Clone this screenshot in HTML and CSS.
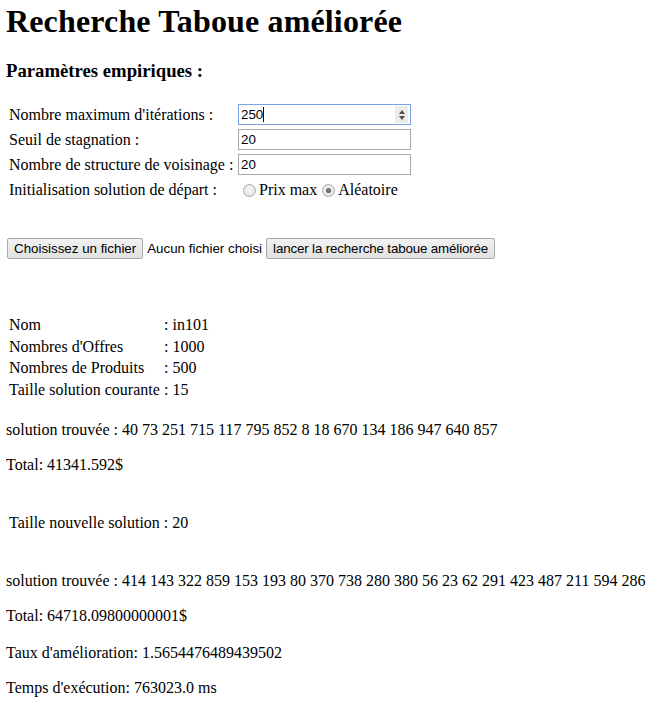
FILE: index.html
```html
<!DOCTYPE html>
<html lang="fr">
<head>
<meta charset="utf-8">
<title>Recherche Taboue améliorée</title>
<link rel="stylesheet" href="styles.css">
</head>
<body>
<h1 class="title">Recherche Taboue améliorée</h1>
<h3 class="subtitle">Paramètres empiriques :</h3>

<div class="params">
  <div class="lbl">Nombre maximum d'itérations :</div>
  <div class="fld">
    <div class="numwrap">
      <input class="txt focused" type="text" value="250">
      <span class="caret"></span>
      <span class="spin"><span class="up"></span><span class="down"></span></span>
    </div>
  </div>
  <div class="lbl">Seuil de stagnation :</div>
  <div class="fld"><input class="txt" type="text" value="20"></div>
  <div class="lbl">Nombre de structure de voisinage :</div>
  <div class="fld"><input class="txt" type="text" value="20"></div>
  <div class="lbl">Initialisation solution de départ :</div>
  <div class="fld radios"><span class="radio"></span><span class="rtext">Prix max</span><span class="radio checked"></span><span class="rtext">Aléatoire</span></div>
</div>

<div class="actions">
  <button class="btn" type="button">Choisissez un fichier</button>
  <span class="nofile">Aucun fichier choisi</span>
  <button class="btn btn-run" type="button">lancer la recherche taboue améliorée</button>
</div>

<div class="info">
  <div class="k">Nom</div><div class="v">: in101</div>
  <div class="k">Nombres d'Offres</div><div class="v">: 1000</div>
  <div class="k">Nombres de Produits</div><div class="v">: 500</div>
  <div class="k">Taille solution courante</div><div class="v">: 15</div>
</div>

<p class="line sol1">solution trouvée : 40 73 251 715 117 795 852 8 18 670 134 186 947 640 857</p>
<p class="line tot1">Total: 41341.592$</p>

<div class="newsize">Taille nouvelle solution : 20</div>

<p class="line sol2">solution trouvée : 414 143 322 859 153 193 80 370 738 280 380 56 23 62 291 423 487 211 594 286</p>
<p class="line tot2">Total: 64718.09800000001$</p>
<p class="line taux">Taux d'amélioration: 1.5654476489439502</p>
<p class="line temps">Temps d'exécution: 763023.0 ms</p>
</body>
</html>
```

FILE: styles.css
```css
html, body {
  background: #ffffff;
}
body {
  margin: 0 6px 8px 6px;
  padding-top: 1px;
  font-family: "Liberation Serif", "Times New Roman", serif;
  font-size: 16px;
  color: #000;
}
.title {
  margin: 2px 0 0 0;
  font-size: 32px;
  line-height: 37px;
  font-weight: bold;
  letter-spacing: 0.15px;
}
.subtitle {
  margin: 20px 0 0 0;
  font-size: 18.72px;
  line-height: 22px;
  font-weight: bold;
}
.params {
  margin-top: 21px;
  padding-left: 3px;
  display: grid;
  grid-template-columns: 225px auto;
  grid-auto-rows: 23px;
  column-gap: 4px;
  row-gap: 2px;
  align-items: center;
  justify-content: start;
}
.lbl {
  line-height: 18px;
  white-space: nowrap;
}
.fld {
  display: flex;
  align-items: center;
}
.txt {
  box-sizing: border-box;
  width: 173px;
  height: 21px;
  margin: 0;
  padding: 1px 2px;
  border: 1px solid #a9a9a9;
  font-family: "Liberation Sans", Arial, sans-serif;
  font-size: 13.33px;
  color: #000;
  background: #fff;
  outline: none;
}
.txt.focused {
  border-color: #7aa3e5;
}
.numwrap {
  position: relative;
  width: 173px;
  height: 21px;
}
.caret {
  position: absolute;
  left: 25px;
  top: 3px;
  width: 1px;
  height: 15px;
  background: #000;
}
.spin {
  position: absolute;
  right: 3px;
  top: 2px;
  width: 13px;
  height: 17px;
  background: #ececec;
  display: flex;
  flex-direction: column;
  align-items: center;
  justify-content: center;
  gap: 2px;
}
.spin .up {
  width: 0;
  height: 0;
  border-left: 3.5px solid transparent;
  border-right: 3.5px solid transparent;
  border-bottom: 4px solid #505050;
}
.spin .down {
  width: 0;
  height: 0;
  border-left: 3.5px solid transparent;
  border-right: 3.5px solid transparent;
  border-top: 4px solid #505050;
}
.radios {
  line-height: 18px;
  white-space: nowrap;
}
.radio {
  box-sizing: border-box;
  display: inline-block;
  width: 13px;
  height: 13px;
  margin: 2px 3px 0 5px;
  border-radius: 50%;
  border: 1px solid #a6a6a6;
  background: radial-gradient(circle at 50% 40%, #f4f4f4 0%, #e2e2e2 100%);
  position: relative;
}
.radio.checked::after {
  content: "";
  position: absolute;
  left: 3px;
  top: 3px;
  width: 5px;
  height: 5px;
  border-radius: 50%;
  background: radial-gradient(circle at 45% 40%, #8a8a8a 0%, #404040 100%);
}
.rtext {
  display: inline-block;
}
.actions {
  margin-top: 37px;
  display: flex;
  align-items: center;
  height: 21px;
  padding-left: 1px;
}
.btn {
  box-sizing: border-box;
  height: 21px;
  margin: 0;
  padding: 0 6px;
  border: 1px solid #a8a8a8;
  border-radius: 2px;
  background: linear-gradient(#f2f2f2, #e1e1e1);
  font-family: "Liberation Sans", Arial, sans-serif;
  font-size: 13.33px;
  color: #000;
  line-height: 19px;
  white-space: nowrap;
}
.btn-run {
  letter-spacing: -0.14px;
}
.nofile {
  margin: 0 4px 0 4px;
  font-family: "Liberation Sans", Arial, sans-serif;
  font-size: 13.33px;
  white-space: nowrap;
}
.info {
  margin-top: 56px;
  padding-left: 3px;
  display: grid;
  grid-template-columns: 153px auto;
  column-gap: 2px;
  row-gap: 2px;
  justify-content: start;
}
.info .k, .info .v {
  line-height: 17.7px;
  padding: 1px 0;
  white-space: nowrap;
}
.line {
  margin: 0;
  line-height: 18px;
  white-space: nowrap;
}
.sol1 { margin-top: 21px; }
.tot1 { margin-top: 17px; }
.newsize {
  margin-top: 39px;
  padding: 1px 0 1px 3px;
  line-height: 17.7px;
}
.sol2 { margin-top: 39px; }
.tot2 { margin-top: 17px; }
.taux { margin-top: 19px; }
.temps { margin-top: 17px; }
```
